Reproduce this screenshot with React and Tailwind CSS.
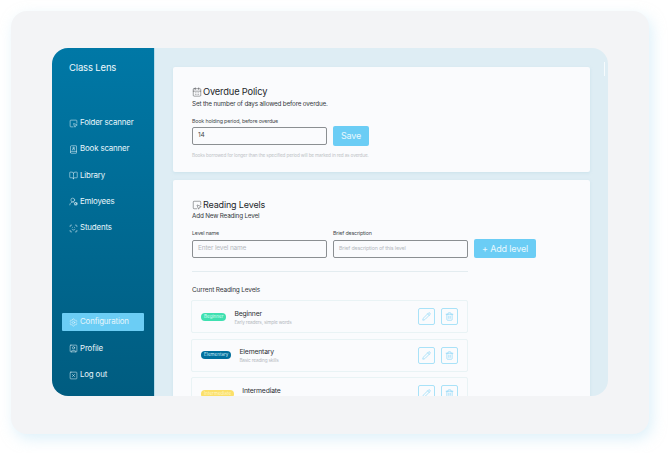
import {
  BookOpen,
  BookUser,
  CalendarDays,
  Pencil,
  ScanFace,
  Settings,
  SquareMousePointer,
  SquareUser,
  SquareX,
  Trash2,
  UserRoundCog,
} from "lucide-react";

const topNav = [
  { label: "Folder scanner", icon: SquareMousePointer },
  { label: "Book scanner", icon: BookUser },
  { label: "Library", icon: BookOpen },
  { label: "Emloyees", icon: UserRoundCog },
  { label: "Students", icon: ScanFace },
];

const bottomNav = [
  { label: "Configuration", icon: Settings, active: true },
  { label: "Profile", icon: SquareUser },
  { label: "Log out", icon: SquareX },
];

const levels = [
  { name: "Beginner", desc: "Early readers, simple words", badge: "Beginner", badgeClass: "bg-[#3fe0b0] text-[#d8fff2]" },
  { name: "Elementary", desc: "Basic reading skills", badge: "Elementary", badgeClass: "bg-[#006f9c] text-[#cdeefa]" },
  { name: "Intermediate", desc: "", badge: "Intermediate", badgeClass: "bg-[#fbe06a] text-[#fff6c8]" },
];

function NavItem({ item }) {
  const Icon = item.icon;
  return (
    <div
      className={`mx-[10px] flex h-[18px] items-center gap-[2px] rounded-[1px] pl-[7px] text-[7.9px] text-[#e8f6fb] ${
        item.active ? "bg-[#6bcdf5]" : ""
      }`}
    >
      <Icon size={9} strokeWidth={1.4} className="shrink-0" />
      <span>{item.label}</span>
    </div>
  );
}

function LevelRow({ level }) {
  return (
    <div className="-ml-px flex h-[33px] w-[277px] shrink-0 items-center rounded-[2px] border border-[#e9f3f5] pl-[9px] pr-[9px]">
      <div className="flex items-center gap-[8px]">
        <span className={`rounded-[4px] px-[3px] py-[1px] text-[4.5px] leading-[6px] tracking-[0.01em] ${level.badgeClass}`}>{level.badge}</span>
        <div>
          <div className="text-[6.8px] leading-[9px] text-[#2c2f33]">{level.name}</div>
          <div className="mt-[1px] h-[6px] text-[4.7px] leading-[6px] text-[#b4b8bd]">{level.desc}</div>
        </div>
      </div>
      <div className="ml-auto flex gap-[6px]">
        <button className="flex h-[17px] w-[17px] items-center justify-center rounded-[2px] border border-[#a9e2f8] text-[#6bcdf5]">
          <Pencil size={9} strokeWidth={1.4} />
        </button>
        <button className="flex h-[17px] w-[17px] items-center justify-center rounded-[2px] border border-[#a9e2f8] text-[#6bcdf5]">
          <Trash2 size={9} strokeWidth={1.4} />
        </button>
      </div>
    </div>
  );
}

export default function App() {
  return (
    <div className="h-[453px] w-[668px] overflow-hidden bg-white p-[11px] pb-[19px] pr-[19px] font-['Inter',sans-serif] tracking-[-0.01em]">
      <div className="h-[423px] w-[638px] rounded-[16px] bg-[#f3f4f6] px-[41px] py-[37px] shadow-[3px_5px_14px_rgba(190,228,245,0.5)]">
        <div className="flex h-[348px] w-[556px] overflow-hidden rounded-[16px]">
          <aside className="flex w-[103px] shrink-0 flex-col border-r border-[#b9dcea] bg-gradient-to-b from-[#0078a6] to-[#005c80] pb-[12px]">
            <div className="ml-[17px] mt-[14px] text-[9.5px] leading-[12px] text-[#eef9fd]">Class Lens</div>
            <nav className="mt-[40px] flex flex-col gap-[8.3px]">
              {topNav.map((item) => (
                <NavItem key={item.label} item={item} />
              ))}
            </nav>
            <nav className="mt-auto flex flex-col gap-[8.3px]">
              {bottomNav.map((item) => (
                <NavItem key={item.label} item={item} />
              ))}
            </nav>
          </aside>

          <main className="relative flex min-w-0 flex-1 flex-col gap-[8px] overflow-hidden bg-[#deedf4] pl-[18px] pr-[18px] pt-[19px]">
            <div className="absolute right-[3px] top-[14px] h-[14px] w-[1px] bg-[#f6fbfd]" />

            <section className="h-[105px] shrink-0 rounded-[2px] bg-[#fafbfd] px-[19px] pt-[18px] shadow-[0_1px_3px_rgba(170,205,220,0.35)]">
              <h2 className="flex items-center gap-[1px] text-[9.3px] leading-[13px] text-[#24272b]">
                <CalendarDays size={10} strokeWidth={1} />
                Overdue Policy
              </h2>
              <p className="mt-[1.5px] text-[6.3px] leading-[9px] text-[#33373b]">Set the number of days allowed before overdue.</p>
              <label className="mt-[8.5px] block text-[5.3px] leading-[8px] text-[#44484c]">Book holding period, before overdue</label>
              <div className="mt-[1px] flex items-center gap-[6px]">
                <div className="flex h-[18px] w-[135px] items-center rounded-[2px] border border-[#8b8f92] pl-[5px] text-[6.5px] text-[#44484c]">14</div>
                <button className="h-[20px] w-[36px] rounded-[2px] bg-[#6bcdf5] text-[9px] text-[#e8f8fe]">Save</button>
              </div>
              <p className="mt-[6px] text-[4.7px] leading-[7px] text-[#c0c3c7]">Books borrowed for longer than the specified period will be marked in red as overdue.</p>
            </section>

            <section className="h-[300px] shrink-0 rounded-[2px] bg-[#fafbfd] px-[19px] pt-[18px] shadow-[0_1px_3px_rgba(170,205,220,0.35)]">
              <h2 className="flex items-center gap-[1px] text-[9px] leading-[13px] text-[#24272b]">
                <SquareMousePointer size={10} strokeWidth={1} />
                Reading Levels
              </h2>
              <p className="mt-[0.5px] text-[6.3px] leading-[9px] text-[#33373b]">Add New Reading Level</p>
              <div className="mt-[8.5px] flex items-end gap-[6px]">
                <div>
                  <label className="block text-[5.3px] leading-[8px] text-[#44484c]">Level name</label>
                  <div className="mt-[3px] flex h-[18px] w-[135px] items-center rounded-[2px] border border-[#8b8f92] pl-[5px] text-[6.5px] text-[#b4b8bd]">Enter level name</div>
                </div>
                <div>
                  <label className="block text-[5.3px] leading-[8px] text-[#44484c]">Brief description</label>
                  <div className="mt-[3px] flex h-[18px] w-[135px] items-center rounded-[2px] border border-[#8b8f92] pl-[5px] text-[5.3px] text-[#b4b8bd]">Brief description of this level</div>
                </div>
                <button className="h-[19px] w-[62px] rounded-[2px] bg-[#6bcdf5] text-[9px] text-[#e8f8fe]">+ Add level</button>
              </div>
              <div className="mt-[13px] h-px w-[276px] bg-[#e3ecf0]" />
              <h3 className="mt-[14px] text-[6.5px] leading-[9px] text-[#33373b]">Current Reading Levels</h3>
              <div className="mt-[5px] flex flex-col gap-[5.5px]">
                {levels.map((level) => (
                  <LevelRow key={level.name} level={level} />
                ))}
              </div>
            </section>
          </main>
        </div>
      </div>
    </div>
  );
}
